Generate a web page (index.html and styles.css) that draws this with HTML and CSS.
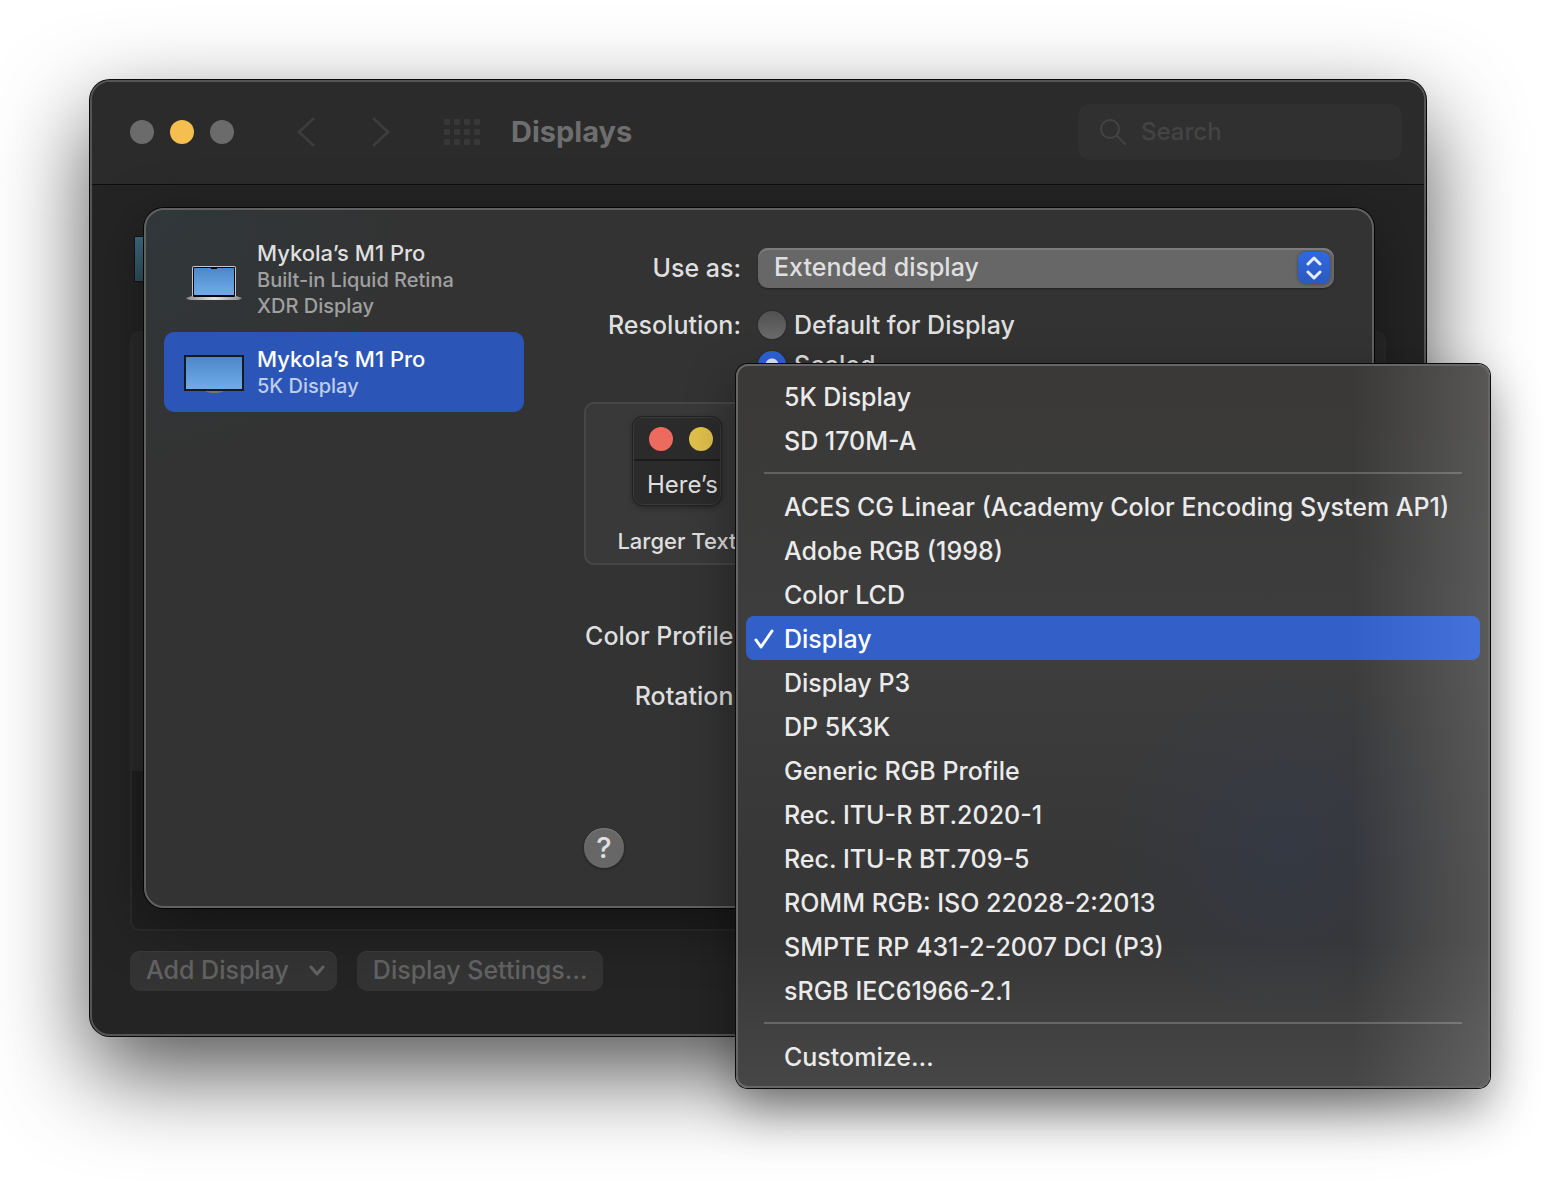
FILE: index.html
```html
<!DOCTYPE html>
<html lang="en">
<head>
<meta charset="utf-8">
<title>Displays</title>
<link rel="stylesheet" href="styles.css">
</head>
<body>
<main class="window">
  <header class="toolbar">
    <div class="lights">
      <button class="light" type="button" aria-label="Close"></button>
      <button class="light light-minimize" type="button" aria-label="Minimize"></button>
      <button class="light" type="button" aria-label="Zoom"></button>
    </div>
    <nav class="nav">
      <button class="nav-button" type="button" aria-label="Back">
        <svg width="20" height="30" viewBox="0 0 20 30"><path d="M17 2 3 15l14 13"/></svg>
      </button>
      <button class="nav-button" type="button" aria-label="Forward">
        <svg width="20" height="30" viewBox="0 0 20 30"><path d="m3 2 14 13L3 28"/></svg>
      </button>
      <button class="nav-button" type="button" aria-label="Show all">
        <svg class="dots" width="36" height="26" viewBox="0 0 36 26">
          <rect x="0" y="0" width="6" height="6" rx="1"/><rect x="10" y="0" width="6" height="6" rx="1"/><rect x="20" y="0" width="6" height="6" rx="1"/><rect x="30" y="0" width="6" height="6" rx="1"/>
          <rect x="0" y="10" width="6" height="6" rx="1"/><rect x="10" y="10" width="6" height="6" rx="1"/><rect x="20" y="10" width="6" height="6" rx="1"/><rect x="30" y="10" width="6" height="6" rx="1"/>
          <rect x="0" y="20" width="6" height="6" rx="1"/><rect x="10" y="20" width="6" height="6" rx="1"/><rect x="20" y="20" width="6" height="6" rx="1"/><rect x="30" y="20" width="6" height="6" rx="1"/>
        </svg>
      </button>
    </nav>
    <h1 class="title">Displays</h1>
    <label class="search">
      <svg width="26" height="26" viewBox="0 0 26 26"><circle cx="10" cy="10" r="9"/><path d="m17 17 8 8"/></svg>
      <input class="search-input" type="search" placeholder="Search" aria-label="Search">
    </label>
  </header>

  <div class="content">
    <div class="tile"></div>
    <div class="panel"><div class="panel-foot"></div></div>
    <footer class="actions">
      <button class="action" type="button">Add Display
        <svg width="16" height="12" viewBox="0 0 16 12"><path d="m2 3 6 7 6-7"/></svg>
      </button>
      <button class="action" type="button">Display Settings…</button>
    </footer>
  </div>

  <section class="sheet">
    <ul class="devices">
      <li>
        <button class="device" type="button">
          <svg class="device-icon" width="60" height="40" viewBox="0 -3 60 40">
            <defs>
              <linearGradient id="screen" x1="0" y1="0" x2="0" y2="1"><stop offset="0" stop-color="#4c88c8"/><stop offset="1" stop-color="#70acea"/></linearGradient>
              <linearGradient id="base" x1="0" y1="0" x2="1" y2="0"><stop offset="0" stop-color="#8b8b8b"/><stop offset=".5" stop-color="#e4e4e4"/><stop offset="1" stop-color="#8b8b8b"/></linearGradient>
            </defs>
            <path d="M8 35V5q0-2 2-2h40q2 0 2 2v30z" fill="#c5c7c8"/>
            <path d="M9 35V5q0-1 1-1h40q1 0 1 1v30z" fill="#080808"/>
            <path d="M10 5h40v27H10z" fill="url(#screen)"/>
            <path d="M27 4h6v2h-6z" fill="#080808"/>
            <path d="M2 35q3-1 6-2l2 1h40l2-1q3 1 6 2-2 2-5 2H7q-3 0-5-2z" fill="url(#base)"/>
          </svg>
          <span class="device-text">
            <span class="device-name">Mykola’s M1 Pro</span>
            <span class="device-kind">Built-in Liquid Retina<br>XDR Display</span>
          </span>
        </button>
      </li>
      <li>
        <button class="device device-selected" type="button" aria-pressed="true">
          <svg class="device-icon" width="60" height="40" viewBox="0 0 60 40">
            <path d="M20 37h21q-3 3-7 3h-7q-4 0-7-3z" fill="#77746a"/>
            <path d="M0 2h60v36H0z" fill="#17191c"/>
            <path d="M2 4h56v32H2z" fill="url(#screen)"/>
          </svg>
          <span class="device-text">
            <span class="device-name">Mykola’s M1 Pro</span>
            <span class="device-kind">5K Display</span>
          </span>
        </button>
      </li>
    </ul>

    <form class="settings">
      <div class="row">
        <label class="label" for="use-as">Use as:</label>
        <div class="popup">
          <select class="popup-select" id="use-as"><option>Extended display</option></select>
          <span class="popup-arrows">
            <svg width="16" height="24" viewBox="0 0 16 24"><path d="m2 8 6-6 6 6M2 16l6 6 6-6"/></svg>
          </span>
        </div>
      </div>
      <div class="row" role="radiogroup" aria-labelledby="resolution">
        <span class="label" id="resolution">Resolution:</span>
        <div class="choices">
          <label class="choice"><input class="radio" type="radio" name="resolution">Default for Display</label>
          <label class="choice"><input class="radio" type="radio" name="resolution" checked>Scaled</label>
        </div>
      </div>
      <div class="scales">
        <figure class="scale">
          <div class="thumb">
            <div class="thumb-bar"><i class="dot dot-red"></i><i class="dot dot-yellow"></i></div>
            <div class="thumb-text">Here’s</div>
          </div>
          <figcaption class="scale-name">Larger Text</figcaption>
        </figure>
      </div>
      <div class="extras">
        <div class="row"><span class="label" id="profile">Color Profile:</span></div>
        <div class="row"><span class="label">Rotation:</span></div>
      </div>
      <button class="help" type="button" aria-label="Help">?</button>
    </form>
  </section>

  <div class="menu" role="group" aria-labelledby="profile">
    <button class="item" type="button">5K Display</button>
    <button class="item" type="button">SD 170M-A</button>
    <hr class="separator">
    <button class="item" type="button">ACES CG Linear (Academy Color Encoding System AP1)</button>
    <button class="item" type="button">Adobe RGB (1998)</button>
    <button class="item" type="button">Color LCD</button>
    <button class="item item-selected" type="button" aria-pressed="true">
      <svg class="check" width="20" height="20" viewBox="0 0 20 20"><path d="m2 11 5 7L18 2"/></svg>Display</button>
    <button class="item" type="button">Display P3</button>
    <button class="item" type="button">DP 5K3K</button>
    <button class="item" type="button">Generic RGB Profile</button>
    <button class="item" type="button">Rec. ITU-R BT.2020-1</button>
    <button class="item" type="button">Rec. ITU-R BT.709-5</button>
    <button class="item" type="button">ROMM RGB: ISO 22028-2:2013</button>
    <button class="item" type="button">SMPTE RP 431-2-2007 DCI (P3)</button>
    <button class="item" type="button">sRGB IEC61966-2.1</button>
    <hr class="separator">
    <button class="item" type="button">Customize…</button>
  </div>
</main>
</body>
</html>
```

FILE: styles.css
```css
* { box-sizing: border-box; }

body {
  margin: 0;
  padding: 80px 142px 158px 90px;
  background: #fff;
  font: 500 25px/40px Inter, "Liberation Sans", sans-serif;
  color: #dfdfdf;
}

button, input, select {
  margin: 0;
  padding: 0;
  border: 0;
  background: none;
  font: inherit;
  color: inherit;
  appearance: none;
}

svg {
  flex: none;
  fill: none;
  stroke-linecap: round;
  stroke-linejoin: round;
}

/* Window */
.window {
  position: relative;
  border: 2px solid #555;
  border-radius: 20px;
  background: #242424;
  box-shadow: 0 0 0 1px #0a0a0a, 0 36px 92px rgba(0, 0, 0, .68);
}

.toolbar {
  display: flex;
  align-items: center;
  height: 103px;
  padding: 0 22px 2px 38px;
  border-bottom: 1px solid #0d0d0d;
  border-radius: 18px 18px 0 0;
  background: #2b2b2b;
}

.lights { display: flex; gap: 16px; }

.light {
  width: 24px;
  height: 24px;
  border-radius: 50%;
  background: #6b6b6b;
}

.light-minimize { background: #f5bf4f; }

.nav { display: flex; margin-left: 34px; }

.nav-button {
  display: flex;
  align-items: center;
  justify-content: center;
  width: 75px;
  height: 40px;
  stroke: #3d3d3d;
  stroke-width: 3;
}

.nav-button .dots { stroke: none; fill: #383838; }

.nav-button:last-child { width: 88px; }

.title {
  flex: 1;
  margin: 0 0 0 5px;
  font-size: 29px;
  font-weight: 700;
  color: #6e6e6e;
}

.search {
  display: flex;
  align-items: center;
  gap: 15px;
  width: 324px;
  height: 56px;
  padding: 0 22px;
  border-radius: 12px;
  background: #303030;
  stroke: #444;
  stroke-width: 2;
}

.search-input { width: 100%; height: 40px; font-size: 24px; }

.search-input::placeholder { color: #444; opacity: 1; }

/* Window content, mostly covered by the sheet */
.content { padding: 51px 38px 43px; }

.tile {
  width: 80px;
  height: 46px;
  margin-left: 4px;
  border: 1px solid #151515;
  background: linear-gradient(#3f6e84, #30505d);
}

.panel {
  display: flex;
  flex-direction: column;
  justify-content: flex-end;
  height: 600px;
  margin-top: 49px;
  border: 2px solid #2c2c2c;
  border-radius: 10px;
  background: #2a2a2a;
}

.panel-foot { height: 158px; border-radius: 0 0 8px 8px; background: #202020; }

.actions { display: flex; gap: 20px; margin-top: 20px; }

.action {
  display: flex;
  align-items: center;
  gap: 20px;
  height: 40px;
  padding: 0 12px 2px 16px;
  border-radius: 10px;
  background: #343434;
  box-shadow: inset 0 1px #3c3c3c;
  color: #636363;
  stroke: #636363;
  stroke-width: 3;
}

.action:last-child { padding-right: 16px; }

/* Sheet */
.sheet {
  position: absolute;
  top: 126px;
  right: 50px;
  left: 52px;
  display: grid;
  grid-template-columns: 360px 1fr;
  gap: 60px;
  padding: 38px 38px 38px 18px;
  border: 2px solid #606060;
  border-radius: 20px;
  background: radial-gradient(circle at 0 0, #30373a, #333 260px);
  box-shadow: 0 0 0 1px #050505, 0 16px 60px rgba(0, 0, 0, .4);
}

.devices { margin: -22px 0 0; padding: 0; list-style: none; }

.device {
  display: flex;
  align-items: center;
  gap: 13px;
  width: 100%;
  padding: 14px 20px 13px;
  border-radius: 10px;
  line-height: 26px;
  text-align: left;
}

.device-selected { background: #2b56b7; color: #fff; }

.device-name { display: block; font-size: 22px; line-height: 27px; }

.device-kind { display: block; font-size: 20px; color: #a0a0a0; }

.device-selected .device-kind { color: #bfccea; }

.settings { display: flex; flex-direction: column; gap: 17px; }

.row {
  display: grid;
  grid-template-columns: 157px 1fr;
  gap: 17px;
}

.label { text-align: right; white-space: nowrap; }

.popup { position: relative; }

.popup-select {
  display: block;
  width: 100%;
  height: 40px;
  padding: 0 60px 3px 16px;
  border-radius: 10px;
  background: #676767;
  box-shadow: inset 0 2px #7d7d7d, 0 1px 2px rgba(0, 0, 0, .4);
  line-height: 32px;
}

.popup-arrows {
  position: absolute;
  top: 4px;
  right: 4px;
  display: grid;
  place-items: center;
  width: 32px;
  height: 32px;
  border-radius: 8px;
  background: linear-gradient(#3068e0, #2a59bf);
  box-shadow: 0 0 3px rgba(0, 0, 0, .4);
  stroke: #e6ecf9;
  stroke-width: 3;
  pointer-events: none;
}

.choice { display: flex; align-items: center; gap: 8px; }

.radio {
  width: 28px;
  height: 28px;
  border-radius: 50%;
  background: linear-gradient(#505050, #6b6b6b);
  box-shadow: 0 0 2px rgba(0, 0, 0, .5);
}

.radio:checked { background: radial-gradient(circle, #dfe8fa 6px, #2d62d6 7px); }

.scales {
  height: 163px;
  padding: 13px 30px;
  border: 2px solid #474747;
  border-radius: 10px;
  background: #393939;
}

.scale {
  display: flex;
  flex-direction: column;
  align-items: center;
  gap: 16px;
  width: 122px;
  margin: 0;
}

.thumb {
  width: 88px;
  height: 88px;
  overflow: hidden;
  border: 1px solid #3b3b3b;
  border-radius: 10px;
  background: #2b2b2b;
  box-shadow: 0 0 0 1px #222, 0 2px 6px rgba(0, 0, 0, .4);
}

.thumb-bar {
  display: flex;
  gap: 16px;
  height: 43px;
  padding: 9px 15px;
  border-bottom: 2px solid #1c1c1c;
}

.dot { flex: none; width: 24px; height: 24px; border-radius: 50%; }
.dot-red { background: #ed6a5e; }
.dot-yellow { background: #e0c14c; }

.thumb-text { padding: 4px 13px; font-size: 24px; font-weight: 400; white-space: nowrap; }

.scale-name { font-size: 22px; white-space: nowrap; }

.extras { display: grid; gap: 20px; margin: 34px 0 95px; }

.help {
  width: 40px;
  height: 40px;
  border-radius: 50%;
  background: #676767;
  box-shadow: inset 0 1px #7a7a7a, 0 1px 3px rgba(0, 0, 0, .4);
  font-size: 29px;
}

/* Colour profile menu */
.menu {
  position: absolute;
  top: 282px;
  right: -66px;
  width: 754px;
  padding: 8px;
  border: 2px solid #666;
  border-radius: 12px;
  background:
    linear-gradient(to right, transparent 82%, rgba(255, 255, 255, .15)),
    linear-gradient(transparent 80%, rgba(255, 255, 255, .08)),
    radial-gradient(circle at 545px 480px, rgba(48, 60, 90, .35), transparent 180px),
    linear-gradient(#3a3938, #3d3d3d 40%, #373737 70%);
  box-shadow: 0 0 0 1px #0a0a0a, 0 20px 50px rgba(0, 0, 0, .42);
}

.item {
  display: flex;
  align-items: center;
  width: 100%;
  height: 44px;
  padding: 2px 0 0 38px;
  border-radius: 8px;
  color: #ebebeb;
  white-space: nowrap;
}

.item-selected {
  gap: 10px;
  padding-left: 8px;
  background: linear-gradient(to right, #3260c8 82%, #4472da);
  color: #fff;
}

.check { stroke: #fff; stroke-width: 3; }

.separator {
  height: 2px;
  margin: 10px 18px;
  border: 0;
  background: rgba(255, 255, 255, .2);
}
```
